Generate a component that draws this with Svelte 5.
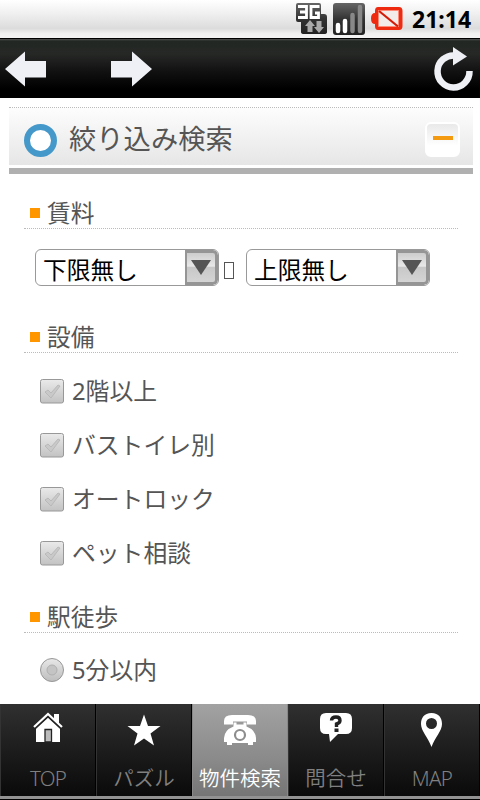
<script lang="ts">
	interface Section {
		title: string;
		kind: 'range' | 'checkbox' | 'radio';
		options: string[];
	}

	const sections: Section[] = [
		{ title: '賃料', kind: 'range', options: ['下限無し', '上限無し'] },
		{
			title: '設備',
			kind: 'checkbox',
			options: ['2階以上', 'バストイレ別', 'オートロック', 'ペット相談']
		},
		{ title: '駅徒歩', kind: 'radio', options: ['5分以内'] }
	];

	const tabs = [
		{ id: 'top', label: 'TOP' },
		{ id: 'puzzle', label: 'パズル' },
		{ id: 'search', label: '物件検索' },
		{ id: 'contact', label: '問合せ' },
		{ id: 'map', label: 'MAP' }
	];

	let activeTab = $state('search');
</script>

<div class="screen">
	<header class="status">
		<svg class="network" width="34" height="34" viewBox="0 0 34 34">
			<defs>
				<linearGradient id="dark" x2="0" y2="1">
					<stop offset="0" stop-color="#666" />
					<stop offset=".5" stop-color="#333" />
					<stop offset="1" stop-color="#222" />
				</linearGradient>
			</defs>
			<path d="M3 1H24Q26 1 26 3V12H29Q32 12 32 15V30Q32 32 29 32H9Q6 32 6 30V20H3Q1 20 1 18V3Q1 1 3 1Z" fill="url(#dark)" />
			<path d="M3 4.500H11.500V15.500H3M5 10H11.500M24.500 4.500H16V15.500H23.500V11H20" fill="none" stroke="#fff" stroke-width="2.800" />
			<path d="M15 18L20 24H17.500V30H12.500V24H10ZM24 31L19 25H21.500V19H26.500V25H29Z" fill="#aaa" />
		</svg>
		<svg class="signal" width="32" height="32" viewBox="0 0 32 32">
			<rect width="32" height="32" rx="3" fill="url(#dark)" />
			<path d="M5 22V28M12 18V28" stroke="#fff" stroke-width="4.500" stroke-linecap="round" />
			<path d="M19.500 12V28M27 4V28" stroke="#888" stroke-width="4.500" stroke-linecap="round" />
		</svg>
		<svg class="battery" width="34" height="26" viewBox="0 0 34 26">
			<path d="M8 1H29Q32.500 1 32.500 5V20Q32.500 24 29 24H8Q5 24 5 20V18Q1 18 1 12.500Q1 7 5 7V5Q5 1 8 1Z" fill="#ee2a10" />
			<path d="M8.500 4.500H28.500V20.500H8.500Z" fill="#f3ebe9" stroke="#ff8a78" />
			<path d="M9 5L28 20.500" stroke="#d51b08" stroke-width="2.200" />
		</svg>
		<span class="clock">21:14</span>
	</header>

	<nav class="toolbar">
		<button aria-label="戻る">
			<svg width="42" height="36" viewBox="0 0 42 36">
				<path d="M0 18L20 .5V10H41V26.500H20V35.500Z" fill="#eef0f5" />
			</svg>
		</button>
		<button class="forward" aria-label="進む">
			<svg width="42" height="36" viewBox="0 0 42 36">
				<path d="M42 18L22 .5V10H1V26.500H22V35.500Z" fill="#eef0f5" />
			</svg>
		</button>
		<button class="reload" aria-label="更新">
			<svg width="42" height="46" viewBox="0 0 42 46">
				<path d="M22 9.500A16 16 0 1 0 36.500 25" fill="none" stroke="#eef0f5" stroke-width="6.500" />
				<path d="M20 1L34 10.500L20 19.500Z" fill="#eef0f5" />
			</svg>
		</button>
	</nav>

	<main>
		<div class="panel">
			<span class="ring"></span>
			<h1>絞り込み検索</h1>
			<button class="collapse" aria-label="閉じる"><span></span></button>
		</div>

		{#each sections as section}
			<section class={section.kind}>
				<h2>{section.title}</h2>
				{#if section.kind === 'range'}
					<div class="selects">
						{#each section.options as option, i}
							{#if i > 0}
								<span class="between"></span>
							{/if}
							<button class="select">
								<span class="value">{option}</span>
								<span class="arrow">
									<svg width="20" height="15" viewBox="0 0 20 15"><path d="M0 0H20L10 15Z" fill="#555" /></svg>
								</span>
							</button>
						{/each}
					</div>
				{:else}
					<ul>
						{#each section.options as option}
							<li>
								{#if section.kind === 'checkbox'}
									<svg width="26" height="26" viewBox="0 0 26 26">
										<defs>
											<linearGradient id="box" x2="0" y2="1">
												<stop offset="0" stop-color="#eaeaea" />
												<stop offset="1" stop-color="#c2c2c2" />
											</linearGradient>
										</defs>
										<rect x="1.500" y="1.500" width="23" height="23.500" rx="2" fill="url(#box)" stroke="#989898" />
										<path d="M6 14L9 12L12 15L19 7L21 8L12 20Z" fill="#c9c9c9" stroke="#b4b4b4" stroke-width=".8" />
									</svg>
								{:else}
									<svg width="26" height="26" viewBox="0 0 26 26">
										<defs>
											<linearGradient id="dot" x2="0" y2="1">
												<stop offset="0" stop-color="#e8e8e8" />
												<stop offset="1" stop-color="#bdbdbd" />
											</linearGradient>
										</defs>
										<circle cx="13" cy="13" r="11.500" fill="url(#dot)" stroke="#989898" />
										<circle cx="13" cy="13" r="5" fill="#c4c4c4" stroke="#b0b0b0" />
									</svg>
								{/if}
								<span>{option}</span>
							</li>
						{/each}
					</ul>
				{/if}
			</section>
		{/each}
	</main>

	<nav class="tabs">
		{#each tabs as tab}
			<button class={tab.id} class:active={tab.id === activeTab} onclick={() => (activeTab = tab.id)}>
				<svg width="36" height="36" viewBox="0 0 36 36" fill="#fff">
					{#if tab.id === 'top'}
						<path d="M6 16L18 5L30 16V30H6Z" />
						<path d="M24 2H29V12L24 8Z" />
						<path d="M4.500 16.500L18 4L31.500 16.500" fill="none" stroke="#222" stroke-width="2.500" />
						<path d="M4 15L18 2L32 15" fill="none" stroke="#fff" stroke-width="2.200" />
						<path d="M15 30V17.500H21.500V30Z" fill="#bbb" stroke="#222" stroke-width="1.300" />
					{:else if tab.id === 'puzzle'}
						<path d="M18 2.500L22 14H34.500L24.500 21.500L28 33.500L18 26.500L8 33.500L11.500 21.500L1.500 14H14Z" />
					{:else if tab.id === 'search'}
						<path d="M2 12.500V9Q2 3 10 3H26Q34 3 34 9V12.500H25V9.500H11V12.500Z" />
						<path d="M11.500 10.500H14.500V12.500H21.500V10.500H24.500V14.500Q33.500 18 34 26V30H31V33H26V31H10V33H5V30H2V26Q2.500 18 11.500 14.500Z" />
						<circle cx="18" cy="23" r="5" fill="none" stroke="#8d8d8d" stroke-width="2.200" />
					{:else if tab.id === 'contact'}
						<path d="M8 1H28Q34 1 34 7V16Q34 22 28 22H20L12 30L11 22H8Q2 22 2 16V7Q2 1 8 1Z" />
						<path d="M13.500 8.500Q13.500 5 18 5Q22 5 22 8.500Q22 11 18.500 12V15" fill="none" stroke="#222" stroke-width="3.400" />
						<rect x="16.500" y="16.500" width="4" height="3.500" fill="#222" />
					{:else}
						<path fill-rule="evenodd" d="M17.500 1C10 1 7 6 7 12C7 19 14 25 17.500 35C21 25 28 19 28 12C28 6 25 1 17.500 1ZM17.500 6A5.500 5.500 0 1 1 17.500 17A5.500 5.500 0 1 1 17.500 6Z" />
					{/if}
				</svg>
				<span>{tab.label}</span>
			</button>
		{/each}
	</nav>
</div>

<style>
	:global(body) {
		background: #fff;
	}

	.screen {
		width: 480px;
		height: 800px;
		overflow: hidden;
		display: flex;
		flex-direction: column;
		box-sizing: border-box;
		background: #fff;
		color: #555;
		font-family: 'Noto Sans', 'Noto Sans CJK JP', sans-serif;
	}

	button {
		padding: 0;
		border: 0;
		background: none;
		font: inherit;
		color: inherit;
	}

	svg {
		display: block;
		flex: none;
	}

	.status {
		height: 38px;
		flex: none;
		display: flex;
		align-items: center;
		justify-content: flex-end;
		padding-right: 8px;
		box-sizing: border-box;
		background: linear-gradient(#fff, #f0f0f0 35%, #dcdcdc 75%, #f0f0f0 88%, #f4f4f4);
	}

	.network {
		margin-right: 4px;
	}

	.signal {
		margin-right: 5px;
	}

	.battery {
		margin-right: 8px;
	}

	.clock {
		width: 60px;
		color: #000;
		font-size: 23px;
		font-weight: 700;
		line-height: 38px;
		white-space: nowrap;
	}

	.toolbar {
		height: 60px;
		flex: none;
		display: flex;
		align-items: center;
		box-sizing: border-box;
		padding: 0 5px;
		border-top: 1px solid #000;
		background: linear-gradient(#555, #222723 2px, #262826 25%, #111 55%, #000 85%);
	}

	.forward {
		margin-left: 63px;
	}

	.reload {
		margin-left: auto;
	}

	main {
		flex: 1;
		min-height: 0;
		overflow: hidden;
		padding: 9px 7px 0 9px;
	}

	.panel {
		height: 67px;
		display: flex;
		align-items: center;
		box-sizing: border-box;
		padding: 0 13px 3px 15px;
		border-top: 1px dotted #bbb;
		border-bottom: 6px solid #b0b0b0;
		background: linear-gradient(#fdfdfd, #e6e6e6) 0 0 / 100% 57px no-repeat;
	}

	.ring {
		width: 33px;
		height: 33px;
		margin-top: 7px;
		box-sizing: border-box;
		border: 6px solid #4598ca;
		border-radius: 50%;
		background: #fff;
	}

	h1 {
		flex: 1;
		margin: 5px 0 0 12px;
		font-size: 27.300px;
		font-weight: 400;
		line-height: 40px;
	}

	.collapse {
		width: 35px;
		height: 35px;
		margin-top: 5px;
		display: flex;
		align-items: center;
		justify-content: center;
		border: 2px solid #fff;
		border-radius: 6px;
		background: linear-gradient(#e9e9e9, #fff 70%);
	}

	.collapse span {
		width: 20px;
		height: 4px;
		margin-bottom: 2px;
		background: #f49a10;
	}

	section {
		margin: 0 6px 0 15px;
	}

	h2 {
		height: 30px;
		display: flex;
		align-items: center;
		gap: 8px;
		margin: 0 9px 0 0;
		padding-left: 6px;
		border-bottom: 1px dotted #bbb;
		font-size: 23.700px;
		font-weight: 400;
		line-height: 30px;
	}

	h2::before {
		content: '';
		width: 10px;
		height: 10px;
		margin-right: -1px;
		background: #ff9600;
	}

	.range {
		padding-top: 24px;
	}

	.selects {
		display: flex;
		align-items: center;
		padding: 20px 0 0 11px;
	}

	.select {
		width: 184px;
		height: 37px;
		display: flex;
		box-sizing: border-box;
		overflow: hidden;
		border: 1px solid #999;
		border-radius: 6px;
		background: #fff;
		color: #000;
		text-align: left;
	}

	.value {
		flex: 1;
		padding-left: 7px;
		font-size: 23.700px;
		line-height: 40px;
	}

	.arrow {
		width: 33px;
		height: 35px;
		display: flex;
		align-items: center;
		justify-content: center;
		box-sizing: border-box;
		border: 3px solid #959595;
		border-left-width: 2px;
		border-radius: 0 5px 5px 0;
		background: linear-gradient(#ccc, #e8e8e8 45%, #c8c8c8 50%, #d4d4d4);
	}

	.between {
		width: 10px;
		height: 17px;
		margin: 5px 12px 0 5px;
		box-sizing: border-box;
		border: 1px solid #555;
	}

	.checkbox {
		padding-top: 36px;
	}

	.radio {
		padding-top: 22px;
	}

	ul {
		margin: 0;
		padding: 11px 0 0 15px;
		list-style: none;
	}

	.radio ul {
		padding-top: 10px;
	}

	li {
		height: 54px;
		display: flex;
		align-items: center;
		gap: 7px;
		font-size: 23.800px;
		line-height: 54px;
	}

	.tabs {
		height: 96px;
		flex: none;
		display: grid;
		grid-template-columns: repeat(5, 1fr);
		box-sizing: border-box;
		border-bottom: 1px solid #000;
		background: #929292;
	}

	.tabs button {
		height: 92px;
		display: flex;
		flex-direction: column;
		align-items: center;
		box-sizing: border-box;
		padding-top: 8px;
		border-left: 1px solid #333;
		border-right: 1px solid #000;
		background: linear-gradient(#303030, #171717 65%, #0a0a0a);
		color: #808080;
		font-size: 20.500px;
		font-weight: 350;
		line-height: 30px;
		white-space: nowrap;
	}

	.tabs span {
		margin-top: 15px;
	}

	.tabs .top,
	.tabs .map {
		letter-spacing: -0.7px;
	}

	.tabs .active {
		border-color: #888;
		background: linear-gradient(#a2a2a2, #8a8a8a 60%, #757575);
		color: #fff;
	}
</style>
